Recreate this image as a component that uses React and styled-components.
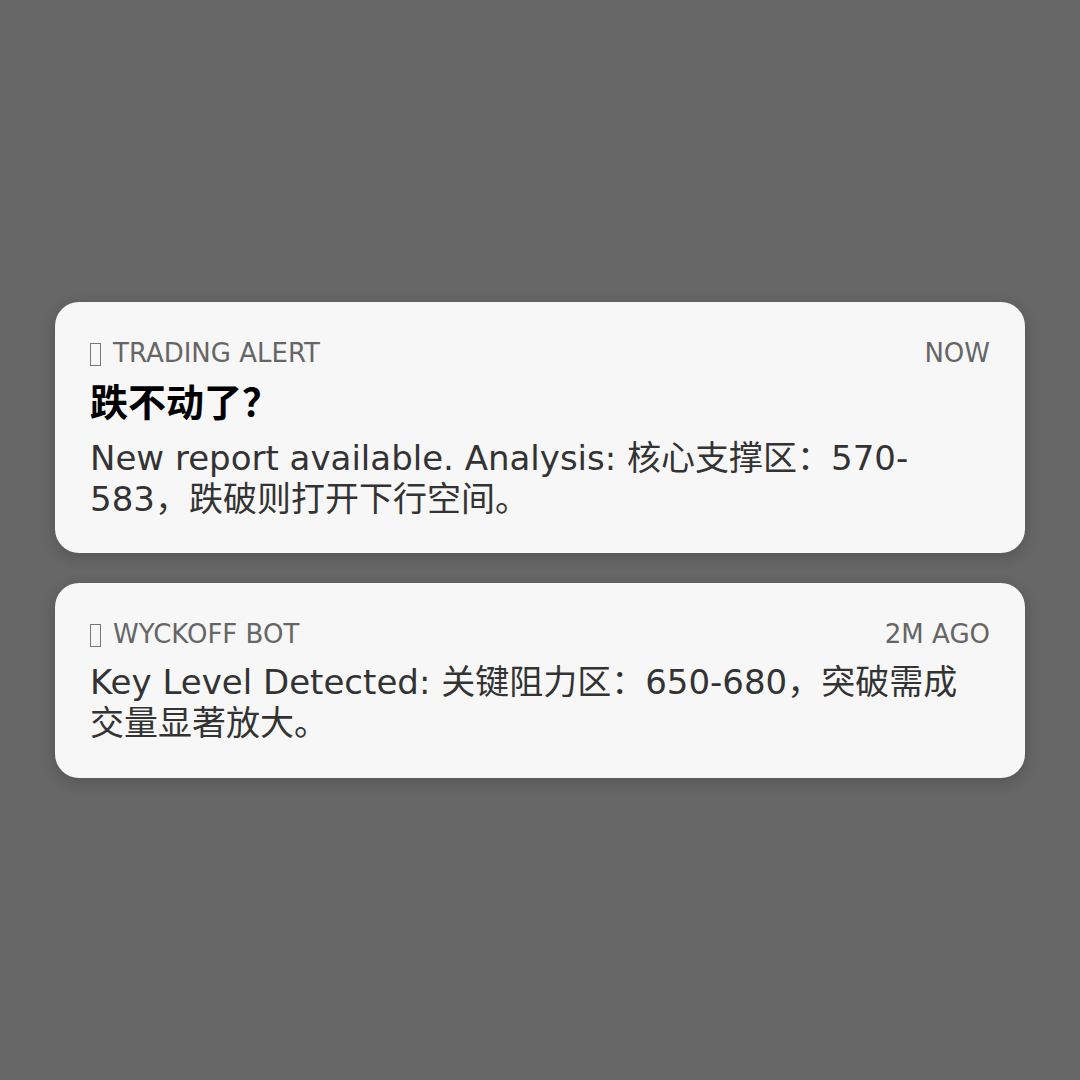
import React from 'react';
import styled, { createGlobalStyle } from 'styled-components';

const GlobalStyle = createGlobalStyle`
    html, body {
        margin: 0;
        padding: 0;
        background: #666666;
    }
    * {
        box-sizing: border-box;
    }
`

const Page = styled.div`
    width: 1080px;
    height: 1080px;
    display: flex;
    flex-direction: column;
    justify-content: center;
    align-items: center;
    gap: 30px;
    font-family: "DejaVu Sans", "Noto Sans CJK SC", sans-serif;
`

const Card = styled.div`
    width: 970px;
    background-color: #f7f7f7;
    border-radius: 24px;
    padding: 36px 35px 34px;
    display: flex;
    flex-direction: column;
    box-shadow: 0 4px 14px rgba(0,0,0,0.18);
`

const Header = styled.div`
    display: flex;
    justify-content: space-between;
    align-items: baseline;
    font-size: 26px;
    color: #666666;
    text-transform: uppercase;
    margin-bottom: 13px;
`

// missing-glyph box, as the app icon shows in the alert
const AppIcon = styled.span`
    display: inline-block;
    width: 11px;
    height: 23px;
    border: 1.5px solid #777;
    margin-right: 12px;
    vertical-align: -4px;
`

const Title = styled.h3`
    margin: 0 0 11px 0;
    font-size: 38px;
    font-weight: 700;
    line-height: 1.2;
    color: #000;
`

const Body = styled.p`
    margin: 0;
    font-size: 34px;
    line-height: 1.2;
    color: #333333;
`

const alerts = [
    {
        source: "Trading Alert",
        time: "Now",
        title: "跌不动了？",
        body: "New report available. Analysis: 核心支撑区：570-583，跌破则打开下行空间。"
    },
    {
        source: "Wyckoff Bot",
        time: "2m ago",
        body: "Key Level Detected: 关键阻力区：650-680，突破需成交量显著放大。"
    }
]

function Notification(props) {
    return (
        <Card>
            <Header>
                <span><AppIcon />{props.source}</span>
                <span>{props.time}</span>
            </Header>
            {props.title && <Title>{props.title}</Title>}
            <Body>{props.body}</Body>
        </Card>
    );
}

function App() {
    return (
        <>
            <GlobalStyle />
            <Page>
                {alerts.map((a, i) => <Notification key={i} {...a} />)}
            </Page>
        </>
    );
}

export default App;
